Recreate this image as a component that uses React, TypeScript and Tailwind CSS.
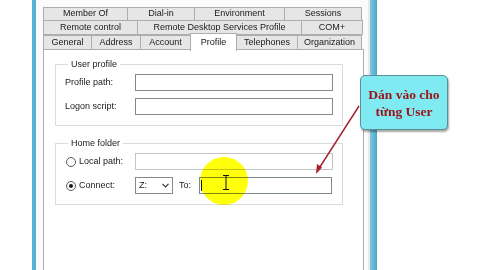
import React from 'react';

const font = { fontFamily: '"Liberation Sans", Arial, sans-serif' };

type TabProps = { label: string; w: string; active?: boolean };

const Tab: React.FC<TabProps> = ({ label, w, active }) => (
  <div
    className={`${w} -ml-px flex items-center justify-center border border-[#adadad] text-[9px] text-[#1a1a1a] first:ml-0 ${
      active ? 'relative z-10 -mt-[2px] h-[18px] border-b-0 bg-white' : 'h-full bg-[#e6e6e6]'
    }`}
  >
    {label}
  </div>
);

const TextBox: React.FC<{ light?: boolean; w?: string; children?: React.ReactNode }> = ({ light, w = 'w-[198px]', children }) => (
  <div
    className={`${w} h-[17px] border bg-white ${light ? 'border-[#c4c4c4]' : 'border-[#7f8a8f]'} relative`}
  >
    {children}
  </div>
);

const Radio: React.FC<{ checked?: boolean }> = ({ checked }) => (
  <span className="flex h-[10px] w-[10px] items-center justify-center rounded-full border border-[#5a5a5a] bg-white">
    {checked && <span className="h-[4px] w-[4px] rounded-full bg-[#1a1a1a]" />}
  </span>
);

const App: React.FC = () => {
  return (
    <div className="relative flex h-[270px] w-[480px] overflow-hidden bg-white" style={font}>
      <div className="w-[32px]" />
      <div className="w-[4px] bg-[#55b2d2]" />

      {/* window body */}
      <div className="flex w-[332px] flex-col bg-[#fbfbfb] pl-[7px] pr-[4px] pt-[7px]">
        <div className="flex h-[14px]">
          <Tab label="Member Of" w="w-[85px]" />
          <Tab label="Dial-in" w="w-[68px]" />
          <Tab label="Environment" w="w-[91px]" />
          <Tab label="Sessions" w="w-[78px]" />
        </div>
        <div className="-mt-px flex h-[15px]">
          <Tab label="Remote control" w="w-[95px]" />
          <Tab label="Remote Desktop Services Profile" w="w-[165px]" />
          <Tab label="COM+" w="w-[62px]" />
        </div>
        <div className="relative z-10 flex h-[15px]">
          <Tab label="General" w="w-[49px]" />
          <Tab label="Address" w="w-[50px]" />
          <Tab label="Account" w="w-[51px]" />
          <Tab label="Profile" w="w-[47px]" active />
          <Tab label="Telephones" w="w-[62px]" />
          <Tab label="Organization" w="w-[65px]" />
        </div>

        {/* tab panel */}
        <div className="-mt-px flex flex-1 flex-col border border-b-0 border-[#adadad] bg-white pl-[11px] pt-[9px]">
          <fieldset className="w-[288px] border border-[#dcdcdc] px-[9px] pb-[10px] pt-[4px]">
            <legend className="ml-[3px] px-[3px] text-[9px] leading-[11px] text-[#1a1a1a]">User profile</legend>
            <div className="flex flex-col gap-[7px]">
              <div className="flex items-center">
                <span className="w-[70px] text-[9px] text-[#1a1a1a]">Profile path:</span>
                <TextBox />
              </div>
              <div className="flex items-center">
                <span className="w-[70px] text-[9px] text-[#1a1a1a]">Logon script:</span>
                <TextBox />
              </div>
            </div>
          </fieldset>

          <fieldset className="mt-[12px] w-[288px] border border-[#dcdcdc] px-[9px] pb-[10px] pt-[4px]">
            <legend className="ml-[3px] px-[3px] text-[9px] leading-[11px] text-[#1a1a1a]">Home folder</legend>
            <div className="flex flex-col gap-[7px]">
              <div className="flex items-center">
                <div className="flex w-[70px] items-center gap-[3px] pl-px">
                  <Radio />
                  <span className="text-[9px] text-[#1a1a1a]">Local path:</span>
                </div>
                <TextBox light />
              </div>
              <div className="flex items-center">
                <div className="flex w-[70px] items-center gap-[3px] pl-px">
                  <Radio checked />
                  <span className="text-[9px] text-[#1a1a1a]">Connect:</span>
                </div>
                <div className="flex h-[17px] w-[38px] items-center justify-between border border-[#8a8a8a] bg-white pl-[3px] pr-[3px] text-[9px] text-[#1a1a1a]">
                  <span>Z:</span>
                  <svg width="7" height="5" viewBox="0 0 7 5" fill="none" stroke="#333" strokeWidth="1.1">
                    <path d="M0.5 0.8 L3.5 4 L6.5 0.8" />
                  </svg>
                </div>
                <span className="ml-[6px] w-[20px] text-[9px] text-[#1a1a1a]">To:</span>
                <TextBox w="w-[133px]">
                  <span className="absolute left-[1px] top-[2px] h-[11px] w-px bg-[#111]" />
                </TextBox>
              </div>
            </div>
          </fieldset>
        </div>
      </div>

      <div className="w-[2px] bg-[#e9e9e9]" />
      <div className="w-[7px] bg-gradient-to-r from-[#7cc6df] to-[#4aa9cb]" />
      <div className="flex-1" />

      {/* highlight circle */}
      <div className="pointer-events-none absolute left-[200px] top-[157px] h-[48px] w-[48px] rounded-full bg-[#ffff00] opacity-95 mix-blend-multiply blur-[0.5px]" />

      {/* I-beam cursor */}
      <svg className="absolute left-[222px] top-[175px]" width="8" height="15" viewBox="0 0 8 15" fill="none" stroke="#111" strokeWidth="1">
        <path d="M1 0.5 H7 M4 0.5 V14.5 M1 14.5 H7" />
      </svg>

      {/* arrow */}
      <svg className="pointer-events-none absolute left-0 top-0" width="480" height="270" viewBox="0 0 480 270">
        <line x1="359" y1="106" x2="318" y2="170" stroke="#a81d2b" strokeWidth="1.4" />
        <path d="M316 174 L317 164 L322 167.5 Z" fill="#a81d2b" />
      </svg>

      {/* callout */}
      <div
        className="absolute left-[360px] top-[75px] flex h-[55px] w-[88px] flex-col items-center justify-center rounded-[5px] border border-[#5c8f96] bg-[#7feaf1] text-[13.5px] font-bold leading-[17px] text-[#9c1219] shadow-[1px_2px_2px_rgba(0,0,0,0.35)]"
        style={{ fontFamily: '"Liberation Serif", "Times New Roman", serif' }}
      >
        <span>Dán vào cho</span>
        <span>từng User</span>
      </div>
    </div>
  );
};

export default App;
